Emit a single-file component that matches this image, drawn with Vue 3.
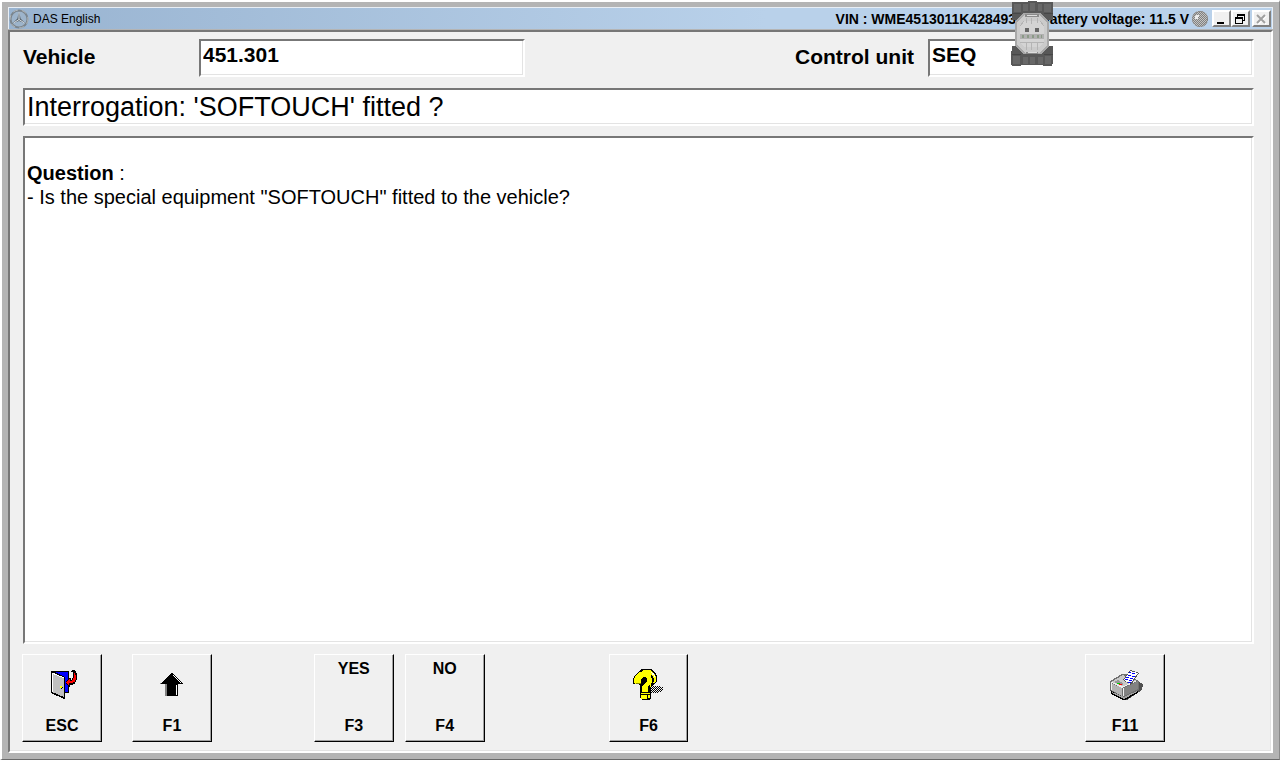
<script setup>
import { ref } from 'vue'

const vehicle = ref('451.301')
const controlUnit = ref('SEQ')

const keyGroups = [
  [
    { key: 'F1', icon: 'up' },
    null,
    { key: 'F3', caption: 'YES' },
    { key: 'F4', caption: 'NO' },
  ],
  [null, { key: 'F6', icon: 'help' }, null, null],
  [null, null, { key: 'F11', icon: 'print' }, null],
]
</script>

<template>
  <div class="window">
    <header class="titlebar">
      <svg class="logo" viewBox="0 0 20 20" aria-hidden="true">
        <circle cx="10" cy="10" r="8.5" fill="#9db4cb" stroke="#7b858d" stroke-width="2" />
        <circle cx="10" cy="10" r="9" fill="none" stroke="#b5bbbf" stroke-width="1" stroke-dasharray="5 4" />
        <path d="M10 2 L11.6 9.4 L16.5 14.6 L10 12 L3.5 14.6 L8.4 9.4 Z" fill="#59636b" />
        <path d="M10 3 V10.5 L15.5 14 M10 10.5 L4.5 14" fill="none" stroke="#d5dce2" stroke-width="1" />
      </svg>
      <span class="title">DAS English</span>
      <span class="vin">VIN : WME4513011K428493</span>
      <span class="voltage">Battery voltage: 11.5 V</span>
      <svg class="lamp" viewBox="0 0 18 18" aria-hidden="true">
        <defs>
          <pattern id="grain" width="2" height="2" patternUnits="userSpaceOnUse">
            <path d="M0 0h1v1H0zM1 1h1v1H1z" fill="#808080" />
          </pattern>
        </defs>
        <circle cx="9" cy="9" r="8" fill="#c4c4c2" />
        <circle cx="9" cy="9" r="8" fill="url(#grain)" />
        <circle cx="9" cy="9" r="7.5" fill="none" stroke="#858585" stroke-dasharray="2 1" />
        <path d="M5 5h3v2H7v2H4V6h1z" fill="#ececec" />
      </svg>
      <div class="controls">
        <button type="button" aria-label="Minimize">
          <svg viewBox="0 0 14 12"><path d="M3 9h7v2H3z" fill="#000" /></svg>
        </button>
        <button type="button" aria-label="Restore">
          <svg viewBox="0 0 14 12" shape-rendering="crispEdges">
            <path d="M4 1h8v7h-2V7h1V3H5v1H4zM2 4h8v7H2zM3 6v4h6V6z" fill="#000" fill-rule="evenodd" />
          </svg>
        </button>
        <button type="button" class="close" aria-label="Close" disabled>
          <svg viewBox="0 0 14 12">
            <path d="M4 3l8 8M12 3l-8 8" fill="none" stroke="#fff" stroke-width="2" />
            <path d="M3 2l8 8M11 2l-8 8" fill="none" stroke="#a0a0a0" stroke-width="2" />
          </svg>
        </button>
      </div>
    </header>

    <main class="client">
      <div class="fields">
        <label for="vehicle">Vehicle</label>
        <input id="vehicle" v-model="vehicle" class="sunken" type="text" readonly />
        <label for="unit" class="unit-label">Control unit</label>
        <input id="unit" v-model="controlUnit" class="sunken" type="text" readonly />
      </div>

      <h1 class="sunken heading">Interrogation: 'SOFTOUCH' fitted ?</h1>

      <section class="sunken question">
        <p><b>Question</b> :</p>
        <p>- Is the special equipment "SOFTOUCH" fitted to the vehicle?</p>
      </section>

      <nav class="keys">
        <button type="button" class="key">
          <span class="caption"></span>
          <svg class="icon" viewBox="-2 0 40 40" aria-hidden="true" shape-rendering="crispEdges">
            <path d="M8 7h17v22H8z" fill="#000" />
            <path d="M9 8h15v20H9z" fill="#00f" />
            <path d="M7 7h2l12 6v22h-1L7 29z" fill="#000" />
            <path d="M8 9l12 5v19L8 28z" fill="#c0c0c0" />
            <path d="M8 9l12 5M8 9v19" fill="none" stroke="#fff" />
            <path d="M16 22h2v2h-2z" fill="#ff0" />
            <path d="M18 23h1v1h-1zM17 24h1v1h-1z" fill="#000" />
            <path d="M28 6h3v1h1v2h1v7h-1v2h-1v2h-2v1h-3v2h-1v-1h-1v-1h-1v-1h-1v-3h1v-1h1v-1h1v-1h2v2h1v-2h1v-6h-2z" fill="#000" />
            <path d="M30 9h1v2h1v5h-1v2h-2v1h-4v2h-1v-1h-1v-1h-1v-1h1v-1h1v-1h1v-1h1v2h2v-1h1v-2h1z" fill="#f00" />
          </svg>
          <span class="name">ESC</span>
        </button>

        <div class="groups">
          <div v-for="(group, g) in keyGroups" :key="g" class="group">
            <template v-for="(item, i) in group" :key="i">
              <span v-if="!item"></span>
              <button v-else type="button" class="key">
                <span class="caption">{{ item.caption }}</span>

                <svg v-if="item.icon === 'up'" class="icon" viewBox="-2 0 40 40" aria-hidden="true" shape-rendering="crispEdges">
                  <path d="M11 20h10v12H11zM6 19h5v1H6z" fill="#808080" />
                  <path d="M17 9h2v1h1v1h1v1h1v1h1v1h1v1h1v1h1v1h1v1h1v1h1v1h-5v12H13V20H7v-1h1v-1h1v-1h1v-1h1v-1h1v-1h1v-1h1v-1h1v-1h1v-1h1z" fill="#000" />
                  <path d="M22 21h1v10h-1z" fill="#fff" />
                  <path d="M19 11h1v1h-1zM20 12h1v1h-1zM21 13h1v1h-1zM22 14h1v1h-1zM23 15h1v1h-1zM24 16h1v1h-1zM25 17h1v1h-1zM26 18h1v1h-1z" fill="#fff" />
                </svg>

                <svg v-else-if="item.icon === 'help'" class="icon" viewBox="2 0 40 40" aria-hidden="true" shape-rendering="crispEdges">
                  <defs>
                    <pattern id="dots" width="2" height="2" patternUnits="userSpaceOnUse">
                      <path d="M0 0h1v1H0zM1 1h1v1H1z" fill="#000" />
                    </pattern>
                  </defs>
                  <path d="M24 22h10v1h2v4h-1v1h-3v1h-8z" fill="url(#dots)" />
                  <path d="M12 7L15 5H24L28 8L30 12V17L28 20L24 23V34L22 36H15L13 34V28L12 20L6 20V15L8 11Z" fill="#000" />
                  <path d="M14 8L16 6H23L27 9L29 13V17L27 19L24 21L23 25V14Z" fill="#ff0" />
                  <path d="M24 8l1 0v1h2v2h1v2h-1v-2h-2v-2h-1z" fill="#fff" />
                  <path d="M13 8H21L25 11L26 14V17L24 20L21 23V28H15V23L17 20L20 17V14L18 13H16L14 15V18L12 20H8L7 19V15L9 11Z" fill="#ff0" />
                  <path d="M15 15h4v2h-1v1h-2v2h-1v3h-1v-2h-2v-1h2v-2h1z" fill="#000" />
                  <path d="M9 19h5v1H9z" fill="#808000" />
                  <path d="M24 11h1v1h1v2h1v4h-1v2h-1v1h-2v1h-1v6h-1v-6h1v-1h2v-2h1v-5h-1z" fill="#000" />
                  <path d="M6 21h7v7H6z" fill="#f0f0f0" />
                  <path d="M13 28h9v1h-9z" fill="#000" />
                  <path d="M14 29h9v1h-9zM14 31h6v4h-6zM21 31h2v3h-2z" fill="#ff0" />
                </svg>

                <svg v-else-if="item.icon === 'print'" class="icon" viewBox="0 0 40 40" aria-hidden="true" shape-rendering="crispEdges">
                  <path d="M32 22h4v1h2v-3h-1v-1h-2v-1h-3zM5 27l13 9h4l15-10v-4H5z" fill="#505050" />
                  <path d="M6 27l13 7 14-8v3l-13 7h-2L6 30z" fill="#000" />
                  <path d="M7 28l12 5 13-7v2l-13 7L7 29z" fill="#a0a0a0" />
                  <path d="M5 17L17 10h4l13 7v9L19 33 5 26z" fill="#707070" />
                  <path d="M6 18L18 11l14 6-14 6z" fill="#c8c8c8" />
                  <path d="M6 19l11 5v8L6 26z" fill="#b4b4b4" />
                  <path d="M19 24l14-7v8L19 32z" fill="#828282" />
                  <path d="M6 18v8M6 18l12 6v8M8 19l10 4 13-6" fill="none" stroke="#eee" />
                  <path d="M9 18l4-2 6 4-3 1z" fill="#989898" />
                  <path d="M18 16L25 6l9 3-8 12z" fill="#555" />
                  <path d="M19 16L25 7l8 2-8 11z" fill="#fff" />
                  <path d="M24 8h2v1h-2zM27 9h3v1h-3zM23 11h3v1h-3zM27 12h3v1h-3zM21 13h3v1h-3zM25 14h3v1h-3zM20 15h3v1h-3zM24 16h3v1h-3zM23 18h3v1h-3z" fill="#00f" />
                  <path d="M12 19h3v1h-3z" fill="#0c0" />
                  <path d="M14 20h3v1h-3z" fill="#f00" />
                </svg>

                <span class="name">{{ item.key }}</span>
              </button>
            </template>
          </div>
        </div>
      </nav>
    </main>

    <svg class="widget" viewBox="0 0 42 65" aria-hidden="true" shape-rendering="crispEdges">
      <path d="M1 1h16V0h9v1h16v18h-5v3H5v-3H1zM1 45h4v-3h32v3h5v18h-1v2h-9v-1H10v1H1v-1H0V50h1z" fill="#585858" />
      <path d="M3 3h7v8H3zM33 3h7v8h-7zM12 3h5v7h-5zM19 2h5v8h-5zM27 3h4v7h-4zM2 55h7v8H2zM34 55h6v8h-6zM12 56h5v7h-5zM19 56h5v7h-5zM27 56h5v7h-5z" fill="#686868" />
      <path d="M1 12h9v1H1zM33 12h9v1h-9zM1 53h9v1H1zM33 53h9v1h-9z" fill="#474747" />
      <path d="M12 12h18l8 9v24l-8 8H12l-8-8V21z" fill="#a8a8a8" />
      <path d="M14 13h14l8 9v22l-8 8H14l-8-8V22z" fill="#cbcbcb" />
      <path d="M14 13h14v3H14zM15 51h12v2H15z" fill="#8b8b8b" />
      <path d="M16 14h10v1H16zM17 51h9v1h-9z" fill="#dedede" />
      <path d="M9 25l4-5h16l4 5v16l-4 5H13l-4-5z" fill="#d4d4d4" />
      <path d="M9 25l4-5M29 20l4 5M9 41h24M15 17v5M20 17v6M26 17v5M15 42v7M20 42v7M26 42v7" fill="none" stroke="#b4b4b4" />
      <path d="M14 27h4v4h-4zM24 27h4v4h-4z" fill="#666" />
      <path d="M9 33h24v5H9z" fill="#b0b0b0" />
      <path d="M11 34h2v3h-2zM16 34h2v3h-2zM21 34h2v3h-2zM26 34h2v3h-2zM30 34h1v3h-1z" fill="#8b9a87" />
    </svg>
  </div>
</template>

<style>
body {
  margin: 0;
  background: #f0f0f0;
}
</style>

<style scoped>
* {
  box-sizing: border-box;
}
.window {
  position: relative;
  display: flex;
  flex-direction: column;
  min-height: 100vh;
  padding: 5px 6px 6px;
  border: 2px solid;
  border-color: #fff #8a8a8a #696969 #fff;
  border-right-width: 1px;
  border-bottom-width: 1px;
  background: #b4b4b4;
  font-family: "Liberation Sans", Arial, sans-serif;
  color: #000;
}
.titlebar {
  display: flex;
  align-items: center;
  height: 22px;
  padding-right: 1px;
  border: 1px solid #e8eef5;
  border-bottom: 0;
  background: linear-gradient(90deg, #99b4d1, #b9d1ea 60%);
  font-size: 12px;
  line-height: 20px;
  white-space: nowrap;
}
.logo {
  width: 20px;
  height: 20px;
  margin-right: 4px;
}
.vin {
  flex: none;
  width: 204px;
  margin-left: auto;
  font-size: 14px;
  font-weight: bold;
}
.voltage {
  font-size: 14px;
  font-weight: bold;
}
.lamp {
  width: 18px;
  height: 18px;
  margin: 0 3px 0 2px;
}
.controls {
  display: flex;
}
.controls button {
  width: 19px;
  height: 17px;
  padding: 0;
  border: 2px solid;
  border-color: #fff #808080 #808080 #fff;
  border-radius: 0;
  background: #f0f0f0;
}
.controls svg {
  display: block;
  width: 14px;
  height: 12px;
}
.controls .close {
  margin-left: 2px;
}
.client {
  flex: 1;
  display: flex;
  flex-direction: column;
  margin-top: 1px;
  padding: 7px 17px 9px 13px;
  border: 2px solid;
  border-color: #777 #fff #fff #777;
  background: #f0f0f0;
  box-shadow: inset -1px -1px #e3e3e3;
}
.sunken {
  border: 2px solid;
  border-color: #777 #fff #fff #777;
  background: #fff;
  box-shadow: inset -1px -1px #e3e3e3;
}
.fields {
  display: grid;
  grid-template-columns: 176px minmax(100px, 326px) 1fr minmax(100px, 326px);
  align-items: center;
  font-size: 21px;
  font-weight: bold;
}
.fields label {
  padding-bottom: 2px;
}
.fields .unit-label {
  padding-right: 14px;
  text-align: right;
}
.fields input {
  width: 100%;
  height: 38px;
  margin: 0;
  padding: 0 2px 6px;
  border-radius: 0;
  font: inherit;
  color: inherit;
  outline: 0;
}
.heading {
  margin: 11px 0 0;
  padding: 0 2px;
  font-size: 27px;
  line-height: 34px;
  font-weight: normal;
}
.question {
  flex: 1;
  margin-top: 10px;
  padding: 23px 2px;
  font-size: 20px;
  line-height: 24px;
}
.question p {
  margin: 0;
}
.keys {
  display: grid;
  grid-template-columns: 80fr 1124fr;
  gap: 30px;
  margin: 10px -2px 0 -1px;
}
.groups {
  display: grid;
  grid-template-columns: repeat(3, 1fr);
  gap: 33px;
}
.group {
  display: grid;
  grid-template-columns: repeat(4, 1fr);
  gap: 11px;
}
.key {
  position: relative;
  display: flex;
  flex-direction: column;
  align-items: center;
  height: 88px;
  padding: 4px 0 5px;
  border: 1px solid;
  border-color: #fff #000 #000 #fff;
  border-radius: 0;
  background: #f0f0f0;
  box-shadow: inset -1px -1px #a0a0a0;
  font: bold 16px/20px "Liberation Sans", Arial, sans-serif;
  color: #000;
}
.icon {
  position: absolute;
  top: 9px;
  width: 40px;
  height: 40px;
}
.name {
  margin-top: auto;
}
.widget {
  position: absolute;
  top: -1px;
  right: 226px;
  width: 42px;
  height: 65px;
}
</style>
